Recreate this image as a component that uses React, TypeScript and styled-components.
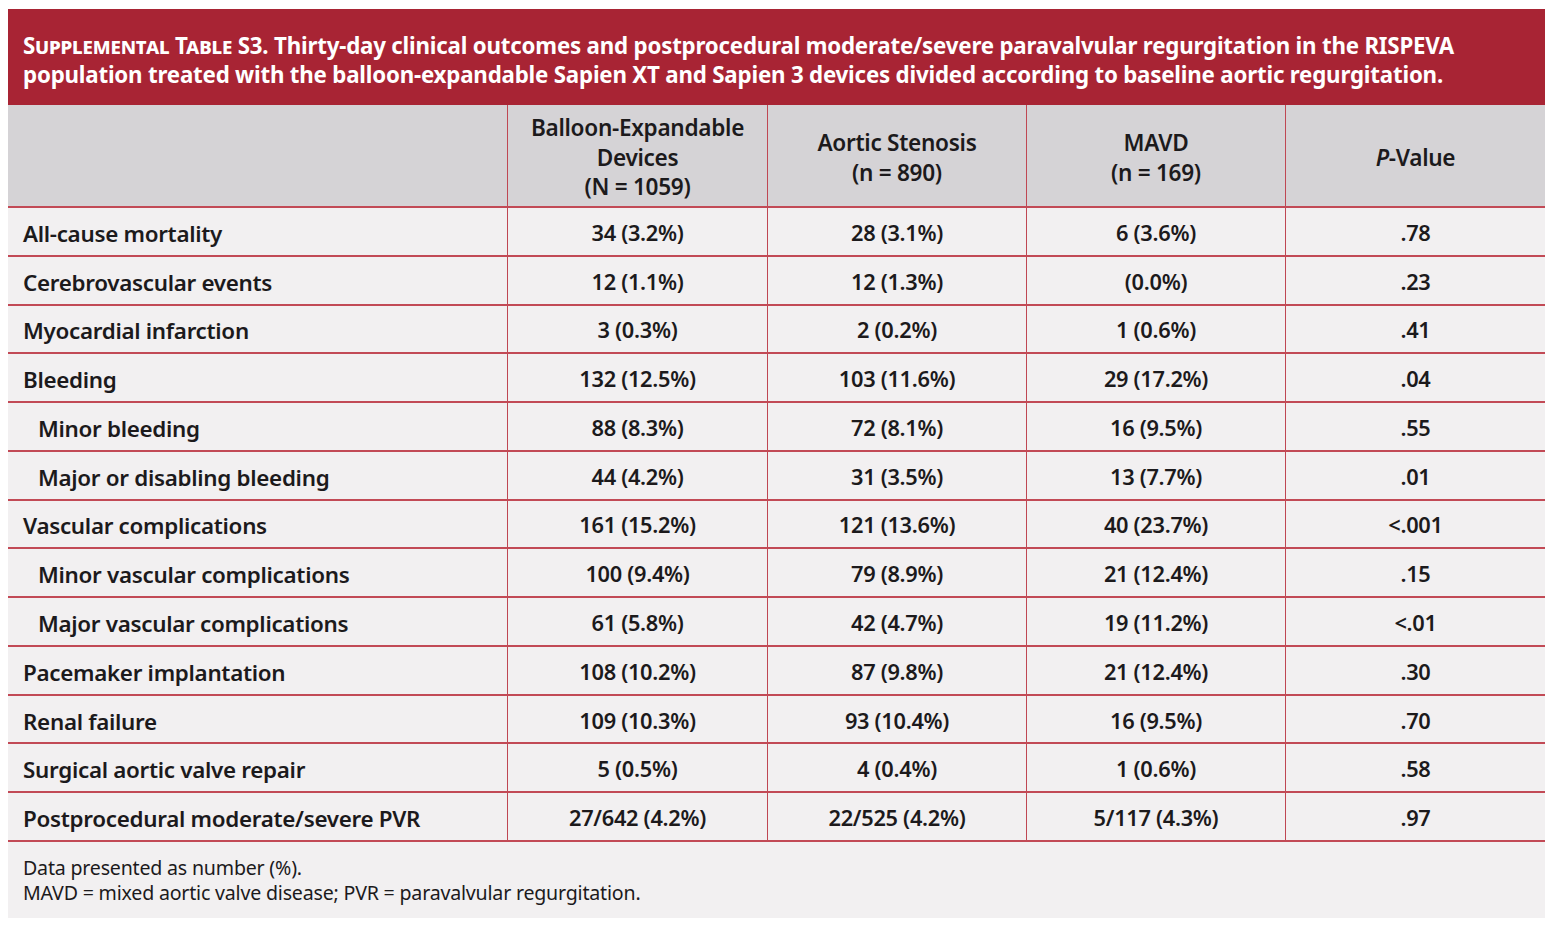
import React from "react";
import styled, {createGlobalStyle} from "styled-components";

type Row = {
    label: string;
    indent?: boolean;
    values: [string, string, string, string];
};

const rows: Row[] = [
    {label: "All-cause mortality", values: ["34 (3.2%)", "28 (3.1%)", "6 (3.6%)", ".78"]},
    {label: "Cerebrovascular events", values: ["12 (1.1%)", "12 (1.3%)", "(0.0%)", ".23"]},
    {label: "Myocardial infarction", values: ["3 (0.3%)", "2 (0.2%)", "1 (0.6%)", ".41"]},
    {label: "Bleeding", values: ["132 (12.5%)", "103 (11.6%)", "29 (17.2%)", ".04"]},
    {label: "Minor bleeding", indent: true, values: ["88 (8.3%)", "72 (8.1%)", "16 (9.5%)", ".55"]},
    {label: "Major or disabling bleeding", indent: true, values: ["44 (4.2%)", "31 (3.5%)", "13 (7.7%)", ".01"]},
    {label: "Vascular complications", values: ["161 (15.2%)", "121 (13.6%)", "40 (23.7%)", "<.001"]},
    {label: "Minor vascular complications", indent: true, values: ["100 (9.4%)", "79 (8.9%)", "21 (12.4%)", ".15"]},
    {label: "Major vascular complications", indent: true, values: ["61 (5.8%)", "42 (4.7%)", "19 (11.2%)", "<.01"]},
    {label: "Pacemaker implantation", values: ["108 (10.2%)", "87 (9.8%)", "21 (12.4%)", ".30"]},
    {label: "Renal failure", values: ["109 (10.3%)", "93 (10.4%)", "16 (9.5%)", ".70"]},
    {label: "Surgical aortic valve repair", values: ["5 (0.5%)", "4 (0.4%)", "1 (0.6%)", ".58"]},
    {label: "Postprocedural moderate/severe PVR", values: ["27/642 (4.2%)", "22/525 (4.2%)", "5/117 (4.3%)", ".97"]},
];

const App = () => {
    return (
        <>
            <GlobalStyle/>
            <Wrapper>
                <Caption>
                    <SmallCaps>Supplemental Table S3.</SmallCaps> Thirty-day clinical outcomes and postprocedural
                    moderate/severe paravalvular regurgitation in the RISPEVA
                    <br/>
                    population treated with the balloon-expandable Sapien XT and Sapien 3 devices divided according
                    to baseline aortic regurgitation.
                </Caption>

                <HeadRow>
                    <HeadCell/>
                    <HeadCell>Balloon-Expandable<br/>Devices<br/>(N = 1059)</HeadCell>
                    <HeadCell>Aortic Stenosis<br/>(n = 890)</HeadCell>
                    <HeadCell>MAVD<br/>(n = 169)</HeadCell>
                    <HeadCell><i>P</i>-Value</HeadCell>
                </HeadRow>

                {rows.map(row => (
                    <BodyRow key={row.label}>
                        <LabelCell $indent={!!row.indent}>{row.label}</LabelCell>
                        {row.values.map((v, i) => (
                            <ValueCell key={i}>{v}</ValueCell>
                        ))}
                    </BodyRow>
                ))}

                <Notes>
                    <div>Data presented as number (%).</div>
                    <div>MAVD = mixed aortic valve disease; PVR = paravalvular regurgitation.</div>
                </Notes>
            </Wrapper>
        </>
    );
};

export default App;

const GlobalStyle = createGlobalStyle`
    body {
        margin: 0;
        background: #ffffff;
        font-family: "Noto Sans", "Open Sans", sans-serif;
    }
`;

const Wrapper = styled.div`
    margin: 9px 9px 0 8px;
    width: 1537px;

    background: #f2f0f1;
    color: #1c1a1c;
`;

const Caption = styled.div`
    height: 96px;
    padding: 22px 15px 0;
    box-sizing: border-box;

    background: #a82434;
    color: #ffffff;

    font-size: 22.3px;
    font-weight: 700;
    line-height: 29px;
    letter-spacing: -0.2px;
    white-space: nowrap;
`;

const SmallCaps = styled.span`
    font-variant: small-caps;
`;

const grid = `
    display: grid;
    grid-template-columns: 499px 260px 259px 259px 1fr;
`;

const HeadRow = styled.div`
    ${grid};
    height: 101px;

    background: #d5d3d6;
`;

const HeadCell = styled.div`
    display: flex;
    align-items: center;
    justify-content: center;

    padding-top: 4px;
    box-sizing: border-box;

    text-align: center;

    font-size: 22.6px;
    font-weight: 600;
    line-height: 29.5px;
    letter-spacing: -0.3px;

    & + & {
        border-left: 1.5px solid #bf4753;
    }
`;

const BodyRow = styled.div`
    ${grid};
    height: 48.77px;

    border-top: 2px solid #c24a56;
    box-sizing: border-box;

    &:last-of-type {
        border-bottom: 2px solid #c24a56;
    }
`;

const LabelCell = styled.div<{ $indent: boolean }>`
    display: flex;
    align-items: center;

    padding: 4px 0 0 ${p => p.$indent ? 30 : 15}px;

    font-size: 22.4px;
    font-weight: 600;
    letter-spacing: -0.3px;
    white-space: nowrap;
`;

const ValueCell = styled.div`
    display: flex;
    align-items: center;
    justify-content: center;

    padding-top: 2px;

    border-left: 1.5px solid #bf4753;

    font-size: 21.8px;
    font-weight: 600;
    letter-spacing: -0.3px;
`;

const Notes = styled.div`
    height: 78px;
    padding: 13px 15px 0;
    box-sizing: border-box;

    border-top: 2px solid #c24a56;

    font-size: 19.6px;
    line-height: 25px;
    letter-spacing: -0.2px;
`;
